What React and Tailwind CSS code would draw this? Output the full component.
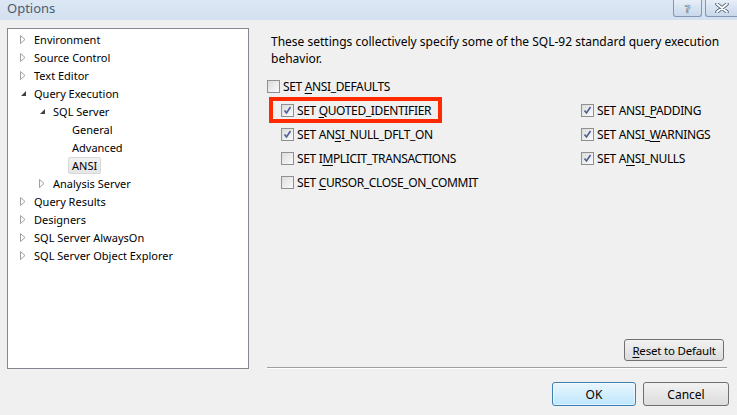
import React from "react";

const font = { fontFamily: '"Noto Sans", "Open Sans", sans-serif' };

function Arrow({ open }) {
  if (open) {
    return (
      <svg width="7" height="7" viewBox="0 0 7 7" className="block">
        <path d="M6 1 L6 6 L1 6 Z" fill="#404040" />
      </svg>
    );
  }
  return (
    <svg width="6" height="9" viewBox="0 0 6 9" className="block">
      <path d="M0.5 0.5 L5 4.5 L0.5 8.5 Z" fill="white" stroke="#a0a0a0" strokeWidth="1" />
    </svg>
  );
}

function TreeRow({ level, arrow, label, selected }) {
  const indent = level === 1 ? "pl-[12px]" : level === 2 ? "pl-[31px]" : "pl-[50px]";
  return (
    <div className={`h-[18px] flex items-center ${indent}`}>
      <div className="w-[14px] flex items-center justify-start">
        {arrow === "closed" && <Arrow />}
        {arrow === "open" && <Arrow open />}
      </div>
      {selected ? (
        <span className="-ml-[4px] px-[3px] h-[17px] flex items-center border border-[#d9d9d9] rounded-[2px] bg-gradient-to-b from-[#f2f2f2] to-[#e5e5e5] text-black">
          {label}
        </span>
      ) : (
        <span className="text-black">{label}</span>
      )}
    </div>
  );
}

function Check({ checked }) {
  return (
    <span className="w-[13px] h-[13px] border border-[#8e8f8f] bg-gradient-to-br from-[#dcdcdc] to-[#fbfbfb] flex items-center justify-center shrink-0">
      {checked && (
        <svg width="9" height="9" viewBox="0 0 9 9">
          <path d="M1.5 4.5 L3.5 7 L7.5 1" fill="none" stroke="#4a5f97" strokeWidth="1.6" />
        </svg>
      )}
    </span>
  );
}

function CheckRow({ checked, pre, u, post, indent }) {
  return (
    <div className={`h-[24px] flex items-center ${indent ? "pl-[14px]" : ""}`}>
      <Check checked={checked} />
      <span className="ml-[3px] text-black whitespace-nowrap tracking-[-0.35px]">
        {pre}
        <span className="underline underline-offset-2">{u}</span>
        {post}
      </span>
    </div>
  );
}

export default function App() {
  return (
    <div className="w-[737px] h-[415px] bg-[#f0f0f0] flex flex-col text-[12px] leading-[15px] overflow-hidden" style={font}>
      {/* Title bar */}
      <div className="h-[20px] bg-gradient-to-b from-[#dce7f4] to-[#d3e0ef] flex items-start justify-between">
        <span className="pl-[7px] pt-[1px] text-[13px] text-[#4b5c70]">Options</span>
        <div className="flex gap-[3px]">
          <div className="w-[29px] h-[17px] border border-t-0 border-[#8496b3] rounded-b-[3px] bg-gradient-to-b from-[#e6eef8] to-[#c9d8ea] flex items-center justify-center">
            <span className="text-[11px] font-bold text-white leading-none" style={{ WebkitTextStroke: "0.6px #5a6a80" }}>?</span>
          </div>
          <div className="w-[32px] h-[17px] border border-t-0 border-r-0 border-[#8496b3] rounded-bl-[3px] bg-gradient-to-b from-[#e6eef8] to-[#c9d8ea] flex items-center justify-center">
            <svg width="14" height="10" viewBox="0 0 14 10">
              <path d="M2 1 L12 9 M12 1 L2 9" stroke="#5a6a80" strokeWidth="3.6" strokeLinecap="round" />
              <path d="M2 1 L12 9 M12 1 L2 9" stroke="white" strokeWidth="1.8" strokeLinecap="round" />
            </svg>
          </div>
        </div>
      </div>

      {/* Body */}
      <div className="flex pl-[7px] pt-[8px]">
        {/* Tree */}
        <div className="w-[242px] h-[341px] border border-[#828790] bg-white pt-[1px] text-[11px]">
          <TreeRow level={1} arrow="closed" label="Environment" />
          <TreeRow level={1} arrow="closed" label="Source Control" />
          <TreeRow level={1} arrow="closed" label="Text Editor" />
          <TreeRow level={1} arrow="open" label="Query Execution" />
          <TreeRow level={2} arrow="open" label="SQL Server" />
          <TreeRow level={3} label="General" />
          <TreeRow level={3} label="Advanced" />
          <TreeRow level={3} label="ANSI" selected />
          <TreeRow level={2} arrow="closed" label="Analysis Server" />
          <TreeRow level={1} arrow="closed" label="Query Results" />
          <TreeRow level={1} arrow="closed" label="Designers" />
          <TreeRow level={1} arrow="closed" label="SQL Server AlwaysOn" />
          <TreeRow level={1} arrow="closed" label="SQL Server Object Explorer" />
        </div>

        {/* Right */}
        <div className="ml-[18px] w-[460px] h-[341px] flex flex-col">
          <div className="pl-[4px] pt-[5px] text-black leading-[17px]">
            <div>These settings collectively specify some of the SQL-92 standard query execution</div>
            <div>behavior.</div>
          </div>
          <div className="mt-[7px] grid grid-cols-[314px_1fr]">
            <div className="flex flex-col">
              <CheckRow checked={false} pre="SET " u="A" post="NSI_DEFAULTS" />
              <div className="relative">
                <div className="absolute left-[2px] top-[-1px] w-[173px] h-[26px] border-[4px] border-[#ff2a00] pointer-events-none" />
                <CheckRow checked indent pre="SET " u="Q" post="UOTED_IDENTIFIER" />
              </div>
              <CheckRow checked indent pre="SET AN" u="S" post="I_NULL_DFLT_ON" />
              <CheckRow checked={false} indent pre="SET I" u="M" post="PLICIT_TRANSACTIONS" />
              <CheckRow checked={false} indent pre="SET " u="C" post="URSOR_CLOSE_ON_COMMIT" />
            </div>
            <div className="flex flex-col pt-[24px]">
              <CheckRow checked pre="SET ANSI_" u="P" post="ADDING" />
              <CheckRow checked pre="SET ANSI_" u="W" post="ARNINGS" />
              <CheckRow checked pre="SET A" u="N" post="SI_NULLS" />
            </div>
          </div>
          <div className="flex-1" />
          <div className="flex justify-end pr-[3px]">
            <button className="w-[100px] h-[22px] border border-[#707070] rounded-[3px] bg-gradient-to-b from-[#f2f2f2] to-[#dcdcdc] text-black text-[11.5px] tracking-[-0.2px] flex items-center justify-center whitespace-nowrap">
              <span>
                <span className="underline underline-offset-2">R</span>eset to Default
              </span>
            </button>
          </div>
          <div className="mt-[6px] h-[2px] border-t border-[#a0a0a0] border-b border-b-white" />
        </div>
      </div>

      {/* Bottom buttons */}
      <div className="flex justify-end gap-[7px] pr-[8px] pt-[13px]">
        <button className="w-[84px] h-[24px] border border-[#3c7fb1] rounded-[3px] bg-gradient-to-b from-[#eaf6fd] to-[#bee6fd] text-black shadow-[inset_0_0_0_1px_#ffffff80]">
          OK
        </button>
        <button className="w-[86px] h-[24px] border border-[#707070] rounded-[3px] bg-gradient-to-b from-[#f2f2f2] to-[#dcdcdc] text-black">
          Cancel
        </button>
      </div>
    </div>
  );
}
